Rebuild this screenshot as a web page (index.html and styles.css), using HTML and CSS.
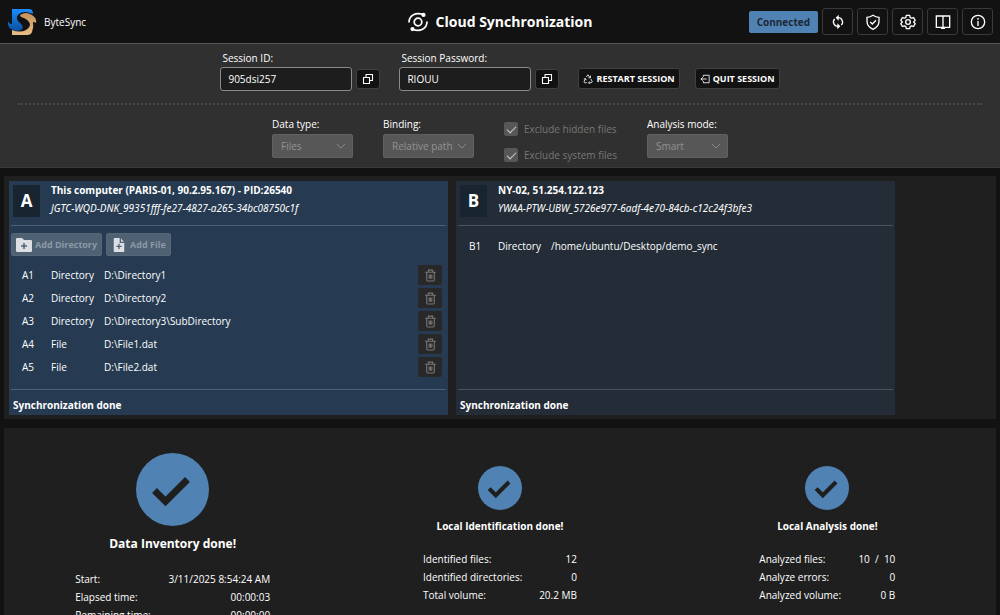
FILE: index.html
```html
<!DOCTYPE html>
<html lang="en">
<head>
<meta charset="utf-8">
<title>ByteSync</title>
<link rel="stylesheet" href="styles.css">
</head>
<body>
<svg class="symbols" aria-hidden="true">
  <symbol id="copy" viewBox="0 0 24 24"><path d="M8 9V3h13v12h-6M3 9h12v12H3z" fill="none" stroke="currentColor" stroke-width="2.2" stroke-linejoin="round"/></symbol>
  <symbol id="chevron" viewBox="0 0 10 6"><path d="M.7.8 5 5.1 9.3.8" fill="none" stroke="currentColor"/></symbol>
  <symbol id="trash" viewBox="0 0 24 24"><path d="M2 6h20M8 6V2h8v4M5 6v14q0 2 2 2h10q2 0 2-2V6M9.500 10v8M12 10v8M14.500 10v8" fill="none" stroke="currentColor" stroke-width="2"/></symbol>
  <symbol id="done" viewBox="0 0 73 73"><circle cx="36.500" cy="36.500" r="36.500" fill="#5083b4"/><path d="M18.500 37.500 29.500 48.500 51.500 26.500" fill="none" stroke="#1f1f1f" stroke-width="6.800"/></symbol>
</svg>
<div class="app">
  <header class="topbar">
    <div class="brand">
      <svg class="brand-logo" viewBox="0 0 30 28" aria-hidden="true">
        <defs>
          <linearGradient id="blue" x1="0" y1="0" x2="0" y2="1"><stop offset="0" stop-color="#1b8cff"/><stop offset="1" stop-color="#0c4f9e"/></linearGradient>
          <linearGradient id="gold" x1="0" y1="0" x2="0" y2="1"><stop offset="0" stop-color="#c2935f"/><stop offset="1" stop-color="#eabd83"/></linearGradient>
        </defs>
        <path fill="url(#blue)" d="M5 1h17q4 0 4 5Q17 2 12 6q-5 4 1 9 5 4 1 7-4 2-8 0-6-2-5-9 1 3 4 3z"/>
        <path fill="url(#gold)" d="M13 7q6-4 12 0 5 3 4 8-1-1-3-1 1 5-1 10-1 3-5 3H5v-5q8 3 14 0 6-4 3-8-1-2-5-4-4-1-4-3z"/>
      </svg>
      <span>ByteSync</span>
    </div>
    <h1 class="title">
      <svg class="title-icon" viewBox="0 0 20 20" aria-hidden="true"><g fill="none" stroke="#fff" stroke-width="1.700"><circle cx="10" cy="10" r="3.800"/><path d="M1 10.500C1 3.500 8-.5 15.500 2.700M19 9.500c0 7-7 11-14.500 7.800"/></g><circle cx="15.500" cy="2.900" r="2.100" fill="#fff"/><circle cx="4.500" cy="17.100" r="2.100" fill="#fff"/></svg>
      Cloud Synchronization
    </h1>
    <nav class="tools">
      <span class="status">Connected</span>
      <button class="tool" aria-label="Synchronize"><svg viewBox="0 0 24 24"><path d="M11 5.500h1a6.500 6.500 0 0 1 5 11M13 18.500h-1a6.500 6.500 0 0 1-5-11"/><path d="m13 1-4.500 4.500L13 10zM11 14l4.500 4.500L11 23z" fill="currentColor" stroke="none"/></svg></button>
      <button class="tool" aria-label="Security"><svg viewBox="0 0 24 24"><path d="M12 2q4 3 9 3v6q0 8-9 12Q3 19 3 11V5q5 0 9-3zM8 12l3 3 5.500-5.500"/></svg></button>
      <button class="tool" aria-label="Settings"><svg viewBox="0 0 24 24"><path d="m9.500 2-.7 3.100-2 1.200-3.100-1-2.500 4.200L3.500 12l-2.300 2.500 2.500 4.200 3.100-1 2 1.200.7 3.100h5l.7-3.100 2-1.200 3.100 1 2.500-4.200-2.300-2.500 2.300-2.500-2.500-4.200-3.100 1-2-1.200-.7-3.100z" stroke-linejoin="round"/><circle cx="12" cy="12" r="3.500"/></svg></button>
      <button class="tool" aria-label="Documentation"><svg viewBox="0 0 24 24"><path d="M2 3h20v17H2zM12 3v17M10 20h4v1.500h-4z"/></svg></button>
      <button class="tool" aria-label="About"><svg viewBox="0 0 24 24"><circle cx="12" cy="12" r="10"/><path d="M12 10.500V18M12 6v2.500"/></svg></button>
    </nav>
  </header>

  <section class="session">
    <div class="session-row">
      <div class="field">
        <label for="sid">Session ID:</label>
        <div class="field-line"><input class="textbox" id="sid" value="905dsi257" readonly><button class="dark-button copy" aria-label="Copy session ID"><svg><use href="#copy"/></svg></button></div>
      </div>
      <div class="field">
        <label for="pwd">Session Password:</label>
        <div class="field-line"><input class="textbox" id="pwd" value="RIOUU" readonly><button class="dark-button copy" aria-label="Copy session password"><svg><use href="#copy"/></svg></button></div>
      </div>
      <div class="session-actions">
        <button class="dark-button command"><svg viewBox="0 0 24 24"><path d="m8 7 4-5 5 7M18 4v5h-5M19 12l3 6q0 3-3 3h-5M16 18l-3 3 3 3M9 21H4q-3-1-1-4l3-6M2 12l4-1 2 4"/></svg>RESTART SESSION</button>
        <button class="dark-button command"><svg viewBox="0 0 24 24"><path d="M8 7V3h14v18H8v-4M16 12H3M7 8l-5 4 5 4"/></svg>QUIT SESSION</button>
      </div>
    </div>
    <div class="options">
      <div class="option"><label for="dtype">Data type:</label><div class="select"><select id="dtype" disabled><option>Files</option></select><svg><use href="#chevron"/></svg></div></div>
      <div class="option binding"><label for="bind">Binding:</label><div class="select"><select id="bind" disabled><option>Relative path</option></select><svg><use href="#chevron"/></svg></div></div>
      <div class="checks">
        <label class="check"><input type="checkbox" checked disabled>Exclude hidden files</label>
        <label class="check"><input type="checkbox" checked disabled>Exclude system files</label>
      </div>
      <div class="option"><label for="mode">Analysis mode:</label><div class="select"><select id="mode" disabled><option>Smart</option></select><svg><use href="#chevron"/></svg></div></div>
    </div>
  </section>

  <main class="content">
    <section class="members">
      <article class="member current">
        <header class="member-head">
          <span class="letter">A</span>
          <div><h2>This computer (PARIS-01, 90.2.95.167) - PID:26540</h2><p class="client">JGTC-WQD-DNK_99351fff-fe27-4827-a265-34bc08750c1f</p></div>
        </header>
        <div class="member-body">
          <div class="add-row">
            <button class="add" disabled><svg viewBox="0 0 16 14"><path fill="#dcdfe3" d="M1 0h5l2 2h7q1 0 1 1v10q0 1-1 1H1q-1 0-1-1V1q0-1 1-1z"/><path d="M8 5v6M5 8h6" stroke="#4f6274" stroke-width="1.500"/></svg>Add Directory</button>
            <button class="add" disabled><svg viewBox="0 0 16 16"><path fill="#dcdfe3" d="M3 0h7l4 5v10q0 1-1 1H3q-1 0-1-1V1q0-1 1-1z"/><path d="M9.500 0v5H14M8 6.500v6M5 9.500h6" fill="none" stroke="#4f6274" stroke-width="1.500"/></svg>Add File</button>
          </div>
          <table class="paths">
            <tr><td class="code">A1</td><td class="kind">Directory</td><td>D:\Directory1</td><td class="action"><button class="remove" disabled aria-label="Remove A1"><svg><use href="#trash"/></svg></button></td></tr>
            <tr><td class="code">A2</td><td class="kind">Directory</td><td>D:\Directory2</td><td class="action"><button class="remove" disabled aria-label="Remove A2"><svg><use href="#trash"/></svg></button></td></tr>
            <tr><td class="code">A3</td><td class="kind">Directory</td><td>D:\Directory3\SubDirectory</td><td class="action"><button class="remove" disabled aria-label="Remove A3"><svg><use href="#trash"/></svg></button></td></tr>
            <tr><td class="code">A4</td><td class="kind">File</td><td>D:\File1.dat</td><td class="action"><button class="remove" disabled aria-label="Remove A4"><svg><use href="#trash"/></svg></button></td></tr>
            <tr><td class="code">A5</td><td class="kind">File</td><td>D:\File2.dat</td><td class="action"><button class="remove" disabled aria-label="Remove A5"><svg><use href="#trash"/></svg></button></td></tr>
          </table>
        </div>
        <footer class="member-foot">Synchronization done</footer>
      </article>
      <article class="member">
        <header class="member-head">
          <span class="letter">B</span>
          <div><h2>NY-02, 51.254.122.123</h2><p class="client">YWAA-PTW-UBW_5726e977-6adf-4e70-84cb-c12c24f3bfe3</p></div>
        </header>
        <div class="member-body">
          <table class="paths">
            <tr><td class="code">B1</td><td class="kind">Directory</td><td>/home/ubuntu/Desktop/demo_sync</td></tr>
          </table>
        </div>
        <footer class="member-foot">Synchronization done</footer>
      </article>
    </section>

    <section class="results">
      <div class="result main">
        <svg class="done"><use href="#done"/></svg>
        <h2>Data Inventory done!</h2>
        <table class="stats">
          <tr><th>Start:</th><td>3/11/2025 8:54:24 AM</td></tr>
          <tr><th>Elapsed time:</th><td>00:00:03</td></tr>
          <tr><th>Remaining time:</th><td>00:00:00</td></tr>
        </table>
      </div>
      <div class="result identification">
        <svg class="done"><use href="#done"/></svg>
        <h2>Local Identification done!</h2>
        <table class="stats">
          <tr><th>Identified files:</th><td>12</td></tr>
          <tr><th>Identified directories:</th><td>0</td></tr>
          <tr><th>Total volume:</th><td>20.2 MB</td></tr>
        </table>
      </div>
      <div class="result analysis">
        <svg class="done"><use href="#done"/></svg>
        <h2>Local Analysis done!</h2>
        <table class="stats">
          <tr><th>Analyzed files:</th><td>10&nbsp; /&nbsp; 10</td></tr>
          <tr><th>Analyze errors:</th><td>0</td></tr>
          <tr><th>Analyzed volume:</th><td>0 B</td></tr>
        </table>
      </div>
    </section>
  </main>
</div>
</body>
</html>
```
FILE: styles.css
```css
* { box-sizing: border-box; }
body { margin: 0; background: #121212; color: #fff; font: 10px/18px "Open Sans", "Noto Sans", sans-serif; }
h1, h2, p { margin: 0; }
button, input, select { font: inherit; color: inherit; margin: 0; }
table { border-spacing: 0; }
th, td { padding: 0; }
svg { display: block; flex: none; }
.symbols { display: none; }
.app { display: flex; flex-direction: column; height: 100vh; overflow: hidden; }

.topbar { display: grid; grid-template-columns: 1fr auto 1fr; align-items: center; flex: none; height: 44px; padding: 0 7px; border-bottom: 1px solid #555; }
.brand { display: flex; align-items: center; gap: 7px; }
.brand-logo { width: 30px; height: 28px; }
.title { display: flex; align-items: center; gap: 8px; font-size: 14px; font-weight: 700; }
.title-icon { width: 20px; height: 20px; }
.tools { display: flex; align-items: center; justify-content: flex-end; gap: 4px; }
.status { padding: 2px 8px; border-radius: 2px; background: #5083b4; color: #1c2835; font-weight: 700; }
.tool { display: grid; place-items: center; width: 31px; height: 27px; padding: 0; border: 1px solid #393939; border-radius: 3px; background: #121212; }
.tool svg { width: 16px; height: 16px; fill: none; stroke: currentColor; stroke-width: 2; }

.session { flex: none; padding: 5px 18px 3px; background: #303030; border-bottom: 1px solid #3a3a3a; }
.session-row { display: flex; justify-content: center; gap: 19px; padding-bottom: 12px; border-bottom: 2px dotted #484848; }
.field label { display: block; padding-left: 2px; }
.field-line { display: flex; align-items: center; gap: 4px; }
.textbox { width: 132px; height: 24px; padding: 0 7px; border: 1px solid #8a8a8a; border-radius: 3px; background: #1d1d1d; }
.dark-button { display: flex; align-items: center; justify-content: center; border: 1px solid #404040; border-radius: 3px; background: #121212; }
.copy { width: 24px; height: 20px; padding: 0; }
.copy svg { width: 12px; height: 12px; }
.session-actions { display: flex; align-items: flex-end; gap: 15px; padding-bottom: 2px; }
.command { gap: 3px; height: 21px; padding: 0 4px; font-size: 9px; font-weight: 700; }
.command svg { width: 10px; height: 10px; fill: none; stroke: currentColor; stroke-width: 2; }
.options { display: flex; justify-content: center; gap: 30px; padding-top: 10px; }
.option { width: 81px; }
.option.binding { width: 91px; }
.option label { display: block; white-space: nowrap; }
.select { position: relative; margin-top: 1px; }
.select select { display: block; width: 100%; height: 24px; padding: 0 8px; appearance: none; border: 1px solid #606060; border-radius: 2px; background: #575757; color: #929292; opacity: 1; }
.select svg { position: absolute; right: 7px; top: 9px; width: 10px; height: 6px; color: #8c8c8c; pointer-events: none; }
.checks { display: flex; flex-direction: column; gap: 8px; padding-top: 5px; }
.check { display: flex; align-items: center; gap: 6px; color: #777; }
.check input { display: grid; place-items: center; width: 14px; height: 14px; appearance: none; border-radius: 2px; background: #575757; }
.check input::before { content: ""; width: 8px; height: 4px; border: solid #d0d0d0; border-width: 0 0 1px 1px; transform: translateY(-1px) rotate(-45deg); }

.content { display: flex; flex: 1; flex-direction: column; gap: 9px; min-height: 0; padding: 8px 4px 0; }
.members { display: grid; grid-template-columns: 439px 439px; gap: 8px; flex: none; padding: 5px 5px 4px; background: #1f1f1f; }
.member { display: flex; flex-direction: column; height: 234px; padding: 0 2px; background: #242d37; }
.current { background: #263b52; }
.member-head { display: flex; gap: 11px; height: 45px; padding: 0 2px; border-bottom: 1px solid #46525e; }
.current .member-head { border-color: #4b6079; }
.letter { display: grid; place-items: center; width: 27px; height: 32px; margin-top: 4px; background: #182430; font-size: 17px; font-weight: 700; }
.member-head h2 { font-size: 10px; font-weight: 700; }
.client { font-family: "Noto Sans", "Open Sans", sans-serif; font-style: italic; }
.member-body { flex: 1; padding-top: 7px; }
.add-row { display: flex; gap: 4px; margin-bottom: 6px; }
.add { display: flex; align-items: center; gap: 3px; height: 23px; padding: 0 4px; border: 1px solid #566779; border-radius: 2px; background: #4f6274; color: #8b99a6; font-size: 9px; font-weight: 700; }
.add svg { width: 16px; height: 14px; }
.paths { width: 100%; border-spacing: 0 3px; }
.paths td { height: 20px; }
.paths .code { width: 40px; padding-left: 11px; }
.paths .kind { width: 53px; }
.paths .action { width: 28px; }
.remove { display: grid; place-items: center; width: 24px; height: 20px; padding: 0; border: 0; border-radius: 2px; background: #282828; color: #777; }
.remove svg { width: 13px; height: 13px; }
.member-foot { padding: 6px 2px 1px; border-top: 1px solid #46525e; font-weight: 700; }
.current .member-foot { border-color: #4b6079; }

.results { display: grid; grid-template-columns: repeat(3, 1fr); align-items: start; flex: 1; min-height: 0; overflow: hidden; padding: 25px 5px 0; background: #1f1f1f; }
.result { display: flex; flex-direction: column; align-items: center; padding-top: 13px; }
.result h2 { margin: 7px 0 15px; font-size: 10px; }
.done { width: 44px; height: 44px; }
.result.main { padding-top: 0; }
.main h2 { margin: 9px 0 17px; font-size: 12px; }
.main .done { width: 73px; height: 73px; }
.stats { width: 154px; }
.main .stats { width: 195px; }
.analysis .stats { width: 136px; }
.stats th { font-weight: 400; text-align: left; }
.stats td { text-align: right; }
```
